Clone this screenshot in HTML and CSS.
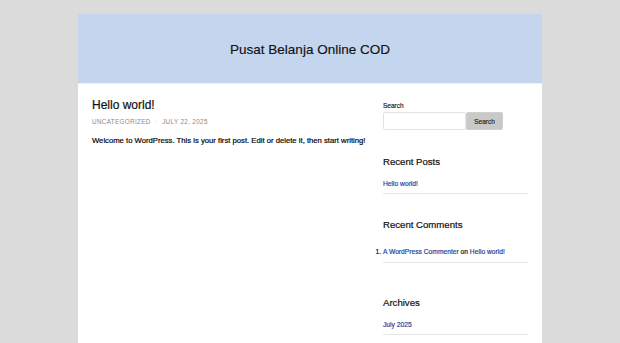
FILE: index.html
```html
<!DOCTYPE html>
<html lang="id">
<head>
  <meta charset="UTF-8">
  <title>Pusat Belanja Online COD</title>
  <link rel="stylesheet" href="styles.css">
</head>
<body>
  <div class="site">
    <header class="site-header">
      <p class="site-title">Pusat Belanja Online COD</p>
    </header>

    <div class="site-content">
      <main class="content-area">
        <article class="post">
          <h2 class="entry-title">Hello world!</h2>
          <div class="entry-meta">
            <span>Uncategorized</span><span class="sep">·</span><span>July 22, 2025</span>
          </div>
          <p class="entry-content">Welcome to WordPress. This is your first post. Edit or delete it, then start writing!</p>
        </article>
      </main>

      <aside class="sidebar">
        <section class="widget widget-search">
          <label class="search-label">Search</label>
          <div class="search-row">
            <input class="search-input" type="text">
            <button class="search-btn">Search</button>
          </div>
        </section>

        <section class="widget">
          <h3 class="widget-title">Recent Posts</h3>
          <ul class="widget-list">
            <li><a href="#">Hello world!</a></li>
          </ul>
        </section>

        <section class="widget widget-comments">
          <h3 class="widget-title">Recent Comments</h3>
          <ol class="widget-list">
            <li><a href="#">A WordPress Commenter</a> on <a href="#">Hello world!</a></li>
          </ol>
        </section>

        <section class="widget widget-archives">
          <h3 class="widget-title">Archives</h3>
          <ul class="widget-list">
            <li><a href="#">July 2025</a></li>
          </ul>
        </section>
      </aside>
    </div>
  </div>
</body>
</html>
```

FILE: styles.css
```css
body {
  margin: 0;
  background: #dbdbdb;
  font-family: "Liberation Sans", Arial, sans-serif;
  color: #111;
}

.site {
  width: 464px;
  margin: 14px auto 0;
  background: #fff;
  min-height: 329px;
}

.site-header {
  height: 69px;
  background: #c4d5ee;
  border-bottom: 1px solid #e9eef7;
  display: flex;
  align-items: center;
  justify-content: center;
}

.site-title {
  margin: 0;
  padding-top: 2px;
  font-size: 13.5px;
  line-height: 16px;
  color: #111;
  -webkit-text-stroke: 0.15px #111;
}

.site-content {
  display: flex;
  justify-content: space-between;
  padding: 14px 14px 0;
}

.content-area {
  width: 280px;
}

.entry-title {
  margin: 0;
  font-size: 12px;
  line-height: 14px;
  font-weight: normal;
  color: #111;
  -webkit-text-stroke: 0.2px #111;
}

.entry-meta {
  margin-top: 6px;
  font-size: 6.3px;
  line-height: 8px;
  letter-spacing: 0.35px;
  text-transform: uppercase;
  color: #8a8a8a;
}

.entry-meta .sep {
  margin: 0 4px 0 5px;
  color: #bbb;
}

.entry-content {
  margin: 9.5px 0 0;
  font-size: 7.7px;
  line-height: 10px;
  color: #000;
  -webkit-text-stroke: 0.18px #000;
}

.sidebar {
  width: 145px;
  margin-top: 4px;
}

.widget {
  margin-bottom: 25px;
}

.search-label {
  display: block;
  font-size: 6.5px;
  line-height: 8px;
  color: #111;
  -webkit-text-stroke: 0.15px #111;
}

.search-row {
  display: flex;
  margin-top: 2px;
}

.search-input {
  box-sizing: border-box;
  width: 83px;
  height: 18px;
  margin: 0;
  border: 1px solid #e2e2e2;
  border-radius: 2px;
  background: #fff;
}

.search-btn {
  box-sizing: border-box;
  width: 37px;
  height: 18px;
  margin: 0;
  padding: 0;
  border: 1px solid #cfcfcf;
  border-radius: 2px;
  background: #c9c9c9;
  font-family: inherit;
  font-size: 6.5px;
  color: #222;
  -webkit-text-stroke: 0.15px #222;
}

.widget-search {
  margin-bottom: 26px;
}

.widget-title {
  margin: 0;
  font-size: 9.6px;
  line-height: 12px;
  font-weight: normal;
  color: #111;
  -webkit-text-stroke: 0.2px #111;
}

.widget-list {
  margin: 11px 0 0;
  padding: 0;
  list-style: none;
  font-size: 6.7px;
  line-height: 9px;
  -webkit-text-stroke: 0.18px currentColor;
}

.widget-list li {
  padding-bottom: 5px;
  border-bottom: 1px solid #e6e6e6;
}

.widget-list a {
  color: #22449a;
  text-decoration: none;
}

.widget-comments .widget-list {
  margin-top: 16px;
  list-style: decimal outside;
}

.widget-comments .widget-list li {
  padding-bottom: 5.5px;
}

.widget-comments {
  margin-bottom: 34px;
}

.widget-archives {
  margin-bottom: 0;
}
```
